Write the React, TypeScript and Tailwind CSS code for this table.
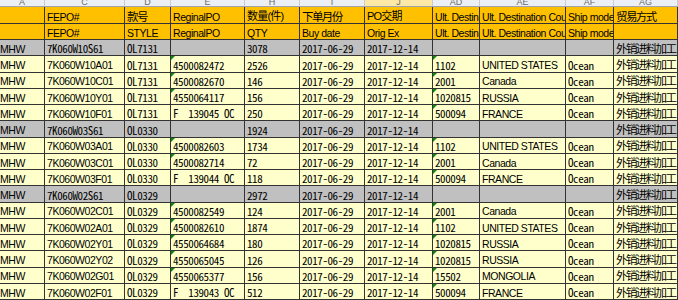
import React from "react";

type Kind = "sans" | "mono" | "cjk" | "mixed";

const W = [
  "w-[45px]",
  "w-[80px]",
  "w-[46px]",
  "w-[74px]",
  "w-[55px]",
  "w-[65px]",
  "w-[68px]",
  "w-[47px]",
  "w-[86px]",
  "w-[48px]",
  "w-[64px]",
];

const LETTERS = ["A", "C", "D", "E", "H", "I", "J", "AD", "AE", "AF", "AG"];

const FONT: Record<Kind, string> = {
  sans: "font-['Liberation_Sans',Arial,sans-serif] text-[10.5px] tracking-[-0.45px]",
  mono: "font-['Noto_Sans_Mono_CJK_SC','Liberation_Mono',monospace] text-[11px] tracking-[-0.4px]",
  cjk: "font-['Noto_Sans_CJK_SC',sans-serif] text-[11.5px] tracking-[-1.6px]",
  mixed: "font-['Liberation_Sans','Noto_Sans_CJK_SC',sans-serif] text-[11px] tracking-[-0.8px]",
};

const HEAD1: [string, Kind][] = [
  ["", "sans"],
  ["FEPO#", "sans"],
  ["款号", "cjk"],
  ["ReginalPO", "sans"],
  ["数量(件)", "mixed"],
  ["下单月份", "cjk"],
  ["PO交期", "mixed"],
  ["Ult. Destination Country", "sans"],
  ["Ult. Destination Country", "sans"],
  ["Ship mode", "sans"],
  ["贸易方式", "cjk"],
];

const HEAD2: [string, Kind][] = [
  ["", "sans"],
  ["FEPO#", "sans"],
  ["STYLE", "sans"],
  ["ReginalPO", "sans"],
  ["QTY", "sans"],
  ["Buy date", "sans"],
  ["Orig Ex", "sans"],
  ["Ult. Destination Country", "sans"],
  ["Ult. Destination Country", "sans"],
  ["Ship mode", "sans"],
  ["", "sans"],
];

type Row = { gray?: boolean; c: string; d: string; e: string; qty: string; ad: string; ae: string };

const ROWS: Row[] = [
  { gray: true, c: "7K060W10S61", d: "OL7131", e: "", qty: "3078", ad: "", ae: "" },
  { c: "7K060W10A01", d: "OL7131", e: "4500082472", qty: "2526", ad: "1102", ae: "UNITED STATES" },
  { c: "7K060W10C01", d: "OL7131", e: "4500082670", qty: "146", ad: "2001", ae: "Canada" },
  { c: "7K060W10Y01", d: "OL7131", e: "4550064117", qty: "156", ad: "1020815", ae: "RUSSIA" },
  { c: "7K060W10F01", d: "OL7131", e: "F  139045 OC", qty: "250", ad: "500094", ae: "FRANCE" },
  { gray: true, c: "7K060W03S61", d: "OL0330", e: "", qty: "1924", ad: "", ae: "" },
  { c: "7K060W03A01", d: "OL0330", e: "4500082603", qty: "1734", ad: "1102", ae: "UNITED STATES" },
  { c: "7K060W03C01", d: "OL0330", e: "4500082714", qty: "72", ad: "2001", ae: "Canada" },
  { c: "7K060W03F01", d: "OL0330", e: "F  139044 OC", qty: "118", ad: "500094", ae: "FRANCE" },
  { gray: true, c: "7K060W02S61", d: "OL0329", e: "", qty: "2972", ad: "", ae: "" },
  { c: "7K060W02C01", d: "OL0329", e: "4500082549", qty: "124", ad: "2001", ae: "Canada" },
  { c: "7K060W02A01", d: "OL0329", e: "4500082610", qty: "1874", ad: "1102", ae: "UNITED STATES" },
  { c: "7K060W02Y01", d: "OL0329", e: "4550064684", qty: "180", ad: "1020815", ae: "RUSSIA" },
  { c: "7K060W02Y02", d: "OL0329", e: "4550065045", qty: "126", ad: "1020815", ae: "RUSSIA" },
  { c: "7K060W02G01", d: "OL0329", e: "4550065377", qty: "156", ad: "15502", ae: "MONGOLIA" },
  { c: "7K060W02F01", d: "OL0329", e: "F  139043 OC", qty: "512", ad: "500094", ae: "FRANCE" },
];

function Cell({
  col,
  text,
  kind,
  flag,
}: {
  col: number;
  text: string;
  kind: Kind;
  flag?: boolean;
}) {
  return (
    <div
      className={`${W[col]} relative h-full shrink-0 flex items-end overflow-hidden border-r border-[#333333] ${
        col === 0 ? "pl-0" : "pl-[2px]"
      } pb-[1px]`}
    >
      {flag && (
        <span className="absolute top-0 left-0 w-0 h-0 border-t-[4px] border-r-[4px] border-t-[#0a8a0a] border-r-transparent" />
      )}
      <span className={`${FONT[kind]} whitespace-pre leading-none text-black`}>{text}</span>
    </div>
  );
}

export default function App() {
  return (
    <div className="w-[678px] h-[300px] overflow-hidden bg-white">
      {/* column letters */}
      <div className="flex h-[7px] bg-[#eceff3] border-b border-[#9ea4ab]">
        {LETTERS.map((l, i) => (
          <div
            key={l}
            className={`${W[i]} shrink-0 flex items-end justify-center overflow-hidden border-r border-[#c9ccd0] ${
              l === "J" ? "bg-[#fde8a6]" : ""
            }`}
          >
            <span className="font-['Liberation_Sans',Arial,sans-serif] text-[9px] leading-[9px] text-[#6b6b6b] -mb-[1px]">
              {l}
            </span>
          </div>
        ))}
      </div>

      {/* orange headers */}
      <div className="flex h-[17px] bg-[#ffc000] border-b border-[#333333]">
        {HEAD1.map(([t, k], i) => (
          <Cell key={i} col={i} text={t} kind={k} />
        ))}
      </div>
      <div className="flex h-[16px] bg-[#ffc000] border-b border-[#333333]">
        {HEAD2.map(([t, k], i) => (
          <Cell key={i} col={i} text={t} kind={k} />
        ))}
      </div>

      {/* data */}
      {ROWS.map((r, idx) => (
        <div
          key={idx}
          className={`flex h-[16.25px] border-b border-[#333333] ${r.gray ? "bg-[#c0c0c0]" : "bg-[#ffffcc]"}`}
        >
          <Cell col={0} text="MHW" kind="sans" />
          <Cell col={1} text={r.c} kind={r.gray ? "mono" : "sans"} />
          <Cell col={2} text={r.d} kind="mono" />
          <Cell col={3} text={r.e} kind="mono" flag={/^\d/.test(r.e)} />
          <Cell col={4} text={r.qty} kind="mono" />
          <Cell col={5} text="2017-06-29" kind="mono" />
          <Cell col={6} text="2017-12-14" kind="mono" />
          <Cell col={7} text={r.ad} kind="mono" flag={r.ad !== ""} />
          <Cell col={8} text={r.ae} kind="sans" />
          <Cell col={9} text={r.gray ? "" : "Ocean"} kind="mono" />
          <Cell col={10} text="外销进料加工" kind="cjk" />
        </div>
      ))}
    </div>
  );
}
